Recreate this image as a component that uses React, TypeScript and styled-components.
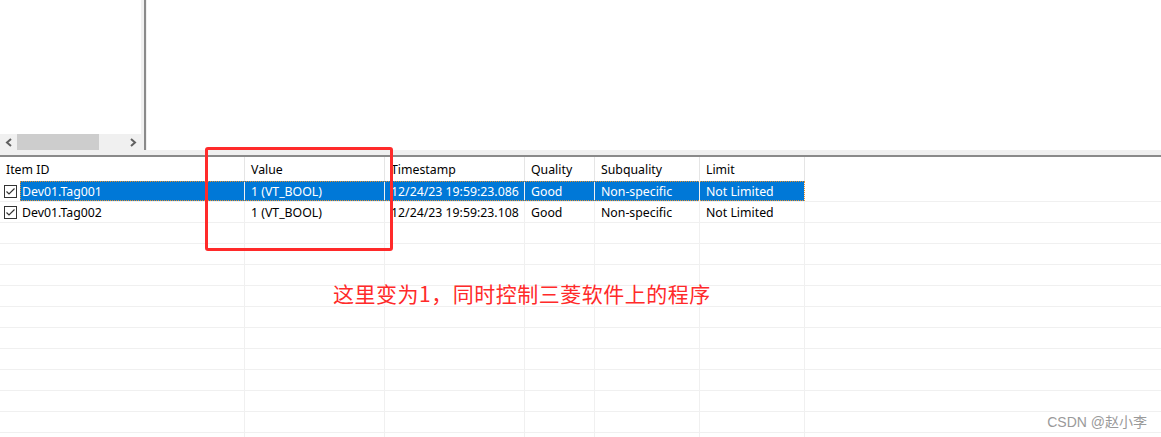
import * as React from 'react';
import styled, { createGlobalStyle } from 'styled-components';

const GRID = '#f0f0f0';
const HEAD_LINE = '#e5e5e5';
const SEL_BLUE = '#0078d7';
const SPLIT_DARK = '#8a8a8a';
const ANNOT_RED = '#ff2a2a';

const GlobalStyle = createGlobalStyle`
  html, body {
    margin: 0;
    padding: 0;
    background: #ffffff;
  }
  body {
    font-family: "Noto Sans", "Noto Sans CJK SC", sans-serif;
    font-size: 12.3px;
    color: #000;
  }
`;

const Page = styled.div`
  position: relative;
  width: 1161px;
  height: 437px;
  overflow: hidden;
  background: #fff;
  display: flex;
  flex-direction: column;
`;

const TopArea = styled.div`
  display: flex;
  height: 150px;
  flex-shrink: 0;
`;

const LeftPane = styled.div`
  width: 141px;
  display: flex;
  flex-direction: column;
`;

const TreeBody = styled.div`
  flex: 1;
  background: #fff;
`;

const HScroll = styled.div`
  height: 16px;
  background: ${GRID};
  display: flex;
  align-items: center;
`;

const ScrollArrow = styled.div`
  width: 17px;
  height: 16px;
  display: flex;
  align-items: center;
  justify-content: center;
`;

const ScrollTrack = styled.div`
  flex: 1;
  height: 16px;
  display: flex;
`;

const ScrollThumb = styled.div`
  width: 82px;
  height: 16px;
  background: #cdcdcd;
`;

const VSplitter = styled.div`
  width: 6px;
  background: ${GRID};
  display: flex;
  padding-left: 3px;
  box-sizing: border-box;

  &::after {
    content: '';
    width: 2px;
    background: ${SPLIT_DARK};
  }
`;

const RightPane = styled.div`
  flex: 1;
  background: #fff;
`;

const HSplitter = styled.div`
  height: 5px;
  flex-shrink: 0;
  background: ${GRID};
  border-bottom: 2px solid ${SPLIT_DARK};
`;

const List = styled.div`
  flex: 1;
  min-height: 0;
  overflow: hidden;
  display: flex;
  flex-direction: column;
`;

const HeaderRow = styled.div`
  display: flex;
  height: 24px;
  flex-shrink: 0;
`;

const HeaderCell = styled.div<{ $w: number }>`
  width: ${p => p.$w}px;
  box-sizing: border-box;
  border-right: 1px solid ${HEAD_LINE};
  padding-left: 6px;
  display: flex;
  align-items: center;
  white-space: nowrap;
`;

const Row = styled.div`
  display: flex;
  height: 21px;
  flex-shrink: 0;
  box-sizing: border-box;
  border-bottom: 1px solid ${GRID};
`;

const CheckSlot = styled.div`
  width: 20px;
  display: flex;
  align-items: center;
  padding-left: 4px;
  box-sizing: border-box;
`;

const Cells = styled.div<{ $selected?: boolean }>`
  display: flex;
  background: ${p => (p.$selected ? SEL_BLUE : 'transparent')};
  color: ${p => (p.$selected ? '#fff' : '#000')};
  outline: ${p => (p.$selected ? '1px dotted #e8902c' : 'none')};
  outline-offset: -1px;
`;

const Cell = styled.div<{ $w: number; $pad?: number }>`
  width: ${p => p.$w}px;
  box-sizing: border-box;
  border-right: 1px solid ${GRID};
  padding-left: ${p => p.$pad ?? 6}px;
  display: flex;
  align-items: center;
  white-space: nowrap;
  overflow: hidden;
`;

const Filler = styled.div`
  flex: 1;
`;

const Annotation = styled.div`
  position: absolute;
  left: 205px;
  top: 147px;
  width: 188px;
  height: 104px;
  box-sizing: border-box;
  border: 3px solid ${ANNOT_RED};
  border-radius: 3px;
`;

const Note = styled.div`
  position: absolute;
  left: 333px;
  top: 281px;
  font-family: "Noto Sans CJK SC", sans-serif;
  font-size: 21px;
  line-height: 24px;
  letter-spacing: 0.5px;
  color: ${ANNOT_RED};
  white-space: nowrap;
`;

const Watermark = styled.div`
  position: absolute;
  right: 14px;
  top: 411px;
  font-family: "Liberation Sans", "Noto Sans CJK SC", sans-serif;
  font-size: 14px;
  color: #9a9a9a;
  white-space: nowrap;
`;

const columns = [
  { label: 'Item ID', w: 245 },
  { label: 'Value', w: 140 },
  { label: 'Timestamp', w: 140 },
  { label: 'Quality', w: 70 },
  { label: 'Subquality', w: 105 },
  { label: 'Limit', w: 105 },
];

const items = [
  { id: 'Dev01.Tag001', value: '1 (VT_BOOL)', ts: '12/24/23 19:59:23.086', selected: true },
  { id: 'Dev01.Tag002', value: '1 (VT_BOOL)', ts: '12/24/23 19:59:23.108', selected: false },
];

const Chevron = ({ dir }: { dir: 'left' | 'right' }) => (
  <svg width="8" height="9" viewBox="0 0 8 9">
    <polyline
      points={dir === 'left' ? '6,1 2,4.5 6,8' : '2,1 6,4.5 2,8'}
      fill="none"
      stroke="#606060"
      strokeWidth="2"
    />
  </svg>
);

const CheckBox = () => (
  <svg width="13" height="13" viewBox="0 0 13 13">
    <rect x="0.5" y="0.5" width="12" height="12" fill="#fff" stroke="#333" />
    <polyline points="2.5,6.5 5,9 10.5,3.5" fill="none" stroke="#333" strokeWidth="1.2" />
  </svg>
);

const _renderItem = (item: typeof items[number]) => (
  <Row key={item.id}>
    <CheckSlot>
      <CheckBox />
    </CheckSlot>
    <Cells $selected={item.selected}>
      <Cell $w={225} $pad={2}>{item.id}</Cell>
      <Cell $w={140}>{item.value}</Cell>
      <Cell $w={140}>{item.ts}</Cell>
      <Cell $w={70}>Good</Cell>
      <Cell $w={105}>Non-specific</Cell>
      <Cell $w={105}>Not Limited</Cell>
    </Cells>
    <Filler />
  </Row>
);

const _renderEmptyRows = (count: number) =>
  Array.from({ length: count }).map((_, i) => (
    <Row key={`empty-${i}`}>
      {columns.map(c => (
        <Cell key={c.label} $w={c.w} />
      ))}
      <Filler />
    </Row>
  ));

const App: React.FC = () => {
  return (
    <>
      <GlobalStyle />
      <Page>
        <TopArea>
          <LeftPane>
            <TreeBody />
            <HScroll>
              <ScrollArrow>
                <Chevron dir="left" />
              </ScrollArrow>
              <ScrollTrack>
                <ScrollThumb />
              </ScrollTrack>
              <ScrollArrow>
                <Chevron dir="right" />
              </ScrollArrow>
            </HScroll>
          </LeftPane>
          <VSplitter />
          <RightPane />
        </TopArea>
        <HSplitter />
        <List>
          <HeaderRow>
            {columns.map(c => (
              <HeaderCell key={c.label} $w={c.w}>{c.label}</HeaderCell>
            ))}
            <Filler />
          </HeaderRow>
          {items.map(_renderItem)}
          {_renderEmptyRows(11)}
        </List>
        <Annotation />
        <Note>这里变为1，同时控制三菱软件上的程序</Note>
        <Watermark>CSDN @赵小李</Watermark>
      </Page>
    </>
  );
};

export default App;
